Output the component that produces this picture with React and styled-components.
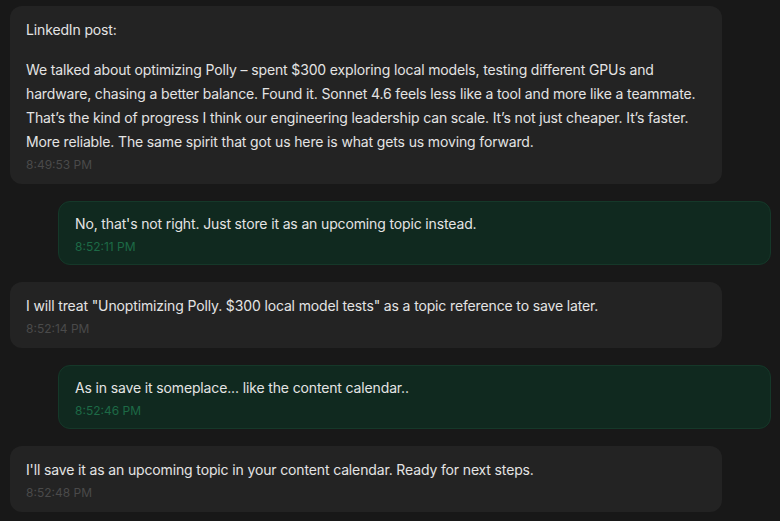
import styled, { createGlobalStyle } from "styled-components";

const GlobalStyle = createGlobalStyle`
  html, body {
    margin: 0;
    padding: 0;
    background: #181818;
  }
  body {
    font-family: Inter, "Noto Sans", sans-serif;
    -webkit-font-smoothing: antialiased;
  }
`;

const messages = [
  {
    from: "assistant",
    time: "8:49:53 PM",
    paragraphs: [
      "LinkedIn post:",
      "We talked about optimizing Polly – spent $300 exploring local models, testing different GPUs and hardware, chasing a better balance. Found it. Sonnet 4.6 feels less like a tool and more like a teammate. That’s the kind of progress I think our engineering leadership can scale. It’s not just cheaper. It’s faster. More reliable. The same spirit that got us here is what gets us moving forward.",
    ],
  },
  {
    from: "user",
    time: "8:52:11 PM",
    paragraphs: ["No, that's not right. Just store it as an upcoming topic instead."],
  },
  {
    from: "assistant",
    time: "8:52:14 PM",
    paragraphs: [
      'I will treat "Unoptimizing Polly. $300 local model tests" as a topic reference to save later.',
    ],
  },
  {
    from: "user",
    time: "8:52:46 PM",
    paragraphs: ["As in save it someplace... like the content calendar.."],
  },
  {
    from: "assistant",
    time: "8:52:48 PM",
    paragraphs: [
      "I'll save it as an upcoming topic in your content calendar. Ready for next steps.",
    ],
  },
];

export default function App() {
  return (
    <>
      <GlobalStyle />
      <Thread>
        {messages.map((m, i) => (
          <Bubble key={i} $user={m.from === "user"}>
            {m.paragraphs.map((p, j) => (
              <Paragraph key={j}>{p}</Paragraph>
            ))}
            <Time $user={m.from === "user"}>{m.time}</Time>
          </Bubble>
        ))}
      </Thread>
    </>
  );
}

const Thread = styled.div`
  display: flex;
  flex-direction: column;
  gap: 17px;
  padding: 6px 9px 0 10px;
`;

const Bubble = styled.div`
  box-sizing: border-box;
  border-radius: 12px;
  color: #e4e4e4;
  background: ${(p) => (p.$user ? "#10291f" : "#232323")};
  border: ${(p) => (p.$user ? "1px solid #153829" : "none")};
  padding: ${(p) => (p.$user ? "10px 16px 7px" : "12px 16px 9px")};
  margin-left: ${(p) => (p.$user ? "48px" : "0")};
  margin-right: ${(p) => (p.$user ? "0" : "49px")};
`;

const Paragraph = styled.p`
  margin: 0;
  font-size: 14px;
  line-height: 24px;
  letter-spacing: -0.14px;
  & + & {
    margin-top: 16px;
  }
`;

const Time = styled.div`
  margin-top: 1px;
  font-size: 12px;
  line-height: 20px;
  color: ${(p) => (p.$user ? "#1d6a46" : "#4a4a4a")};
`;
